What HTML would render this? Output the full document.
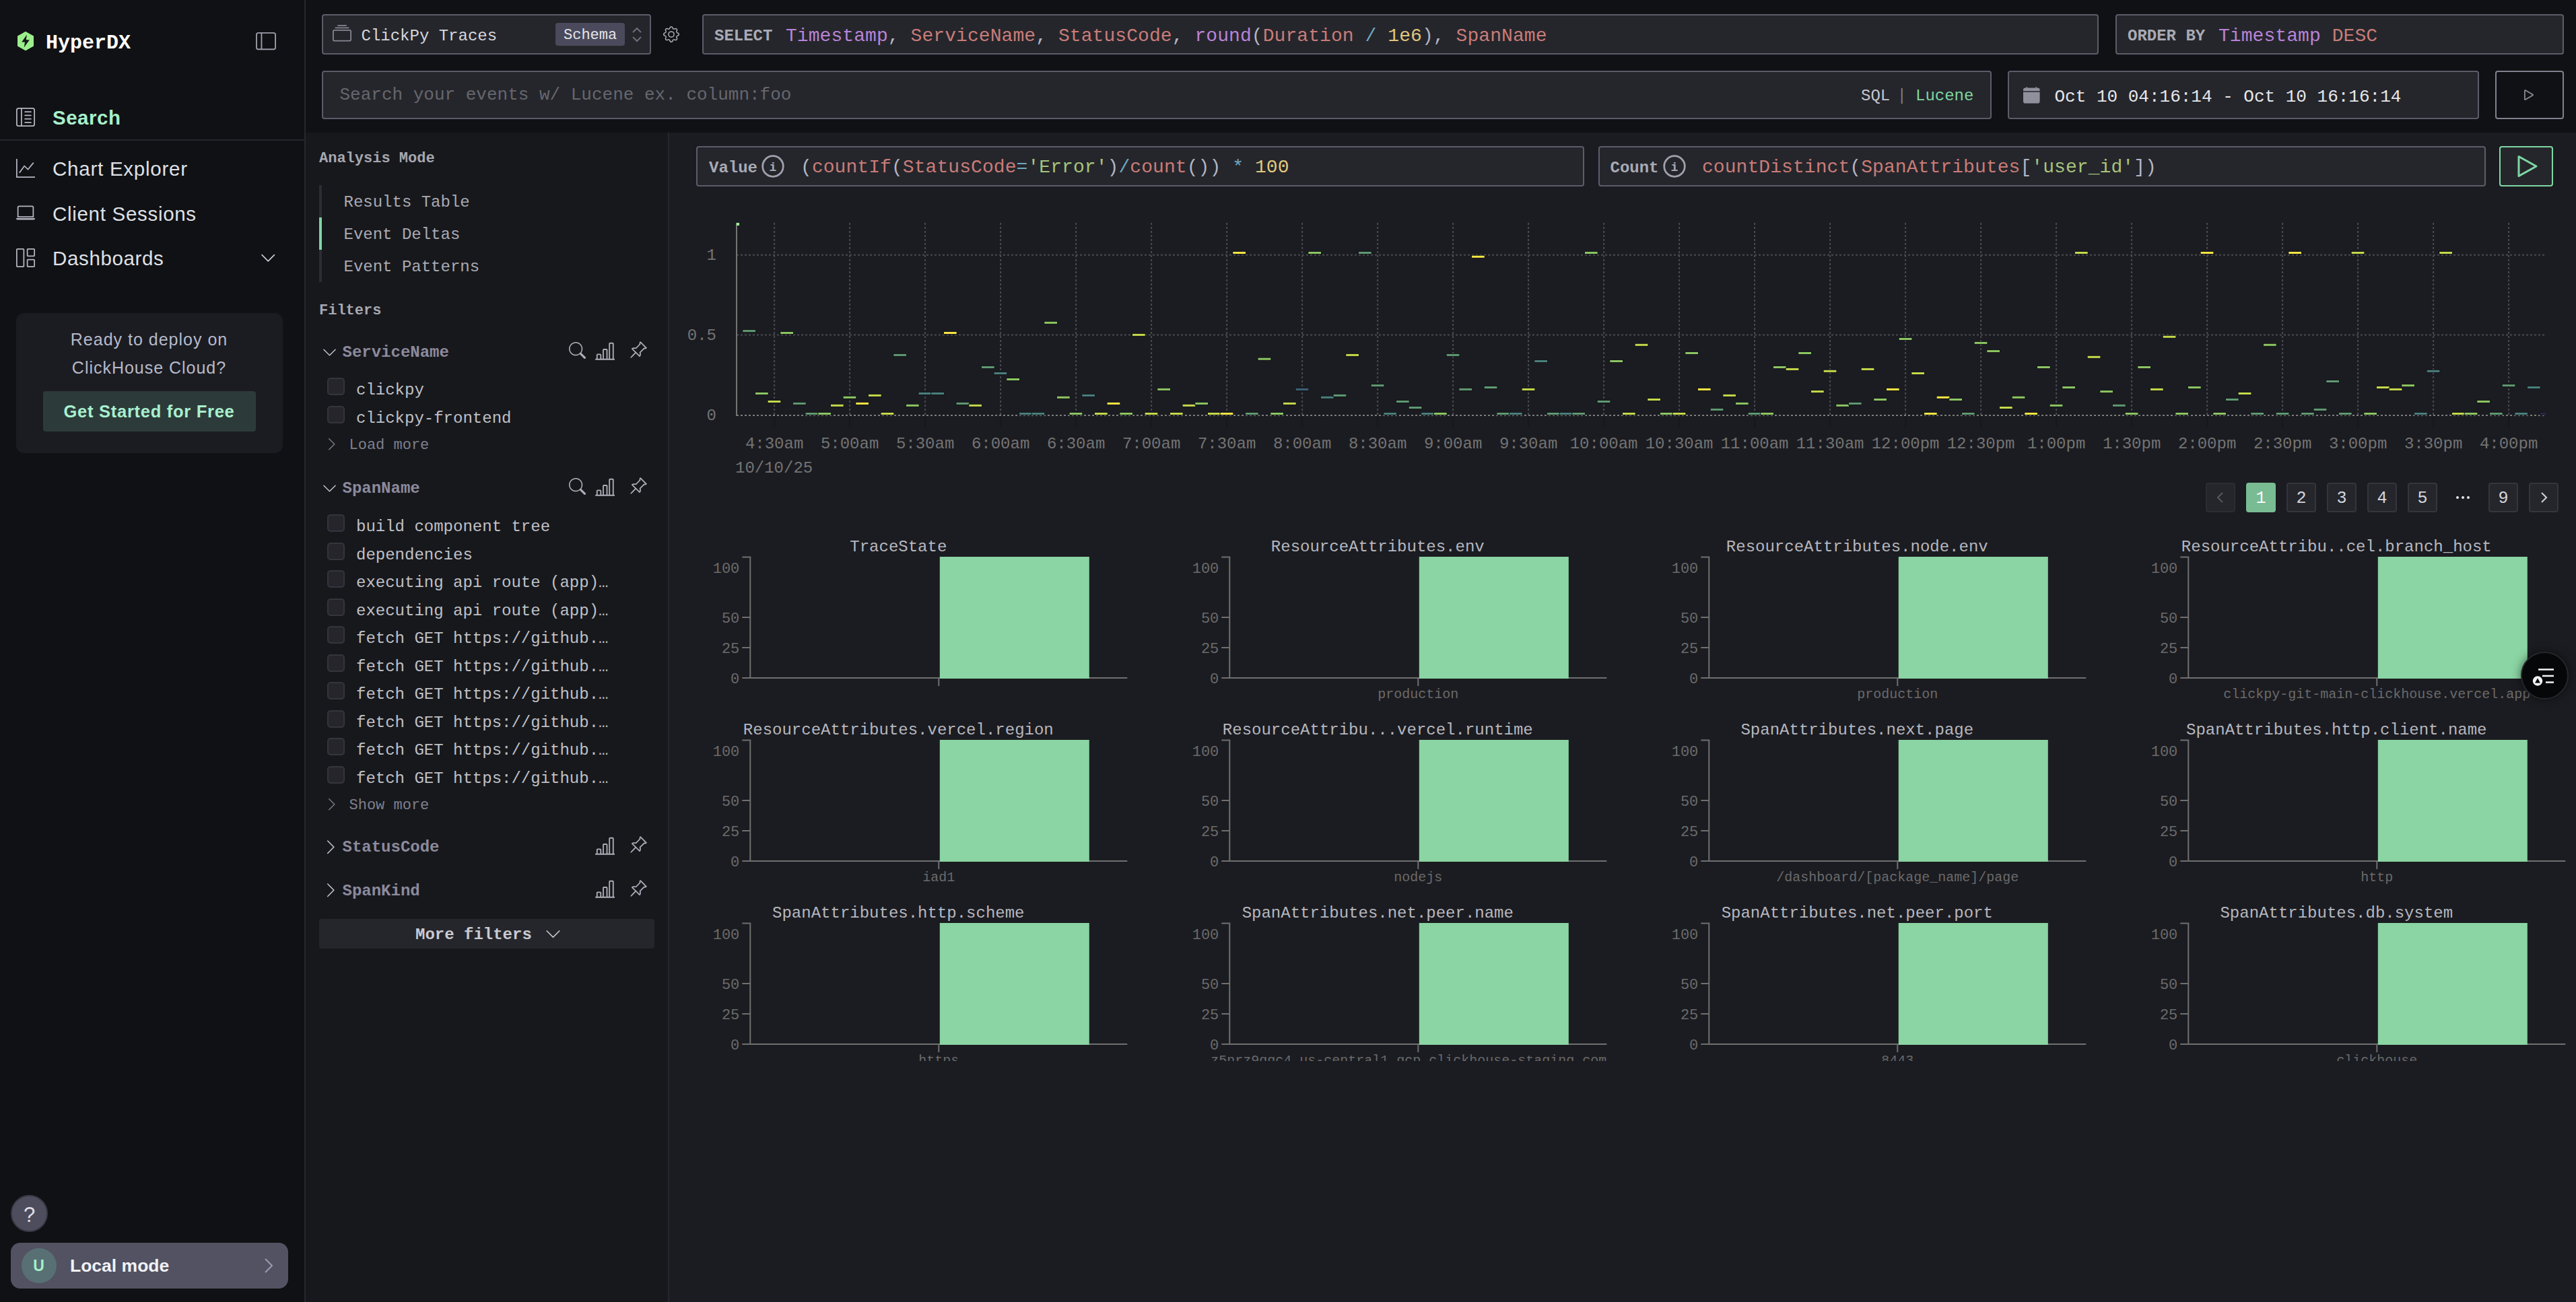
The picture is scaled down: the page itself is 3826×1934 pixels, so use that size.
<!DOCTYPE html>
<html lang="en"><head><meta charset="utf-8"><title>HyperDX - Search</title>
<style>
html,body{margin:0;padding:0;background:#1b1c21;}
body{width:3826px;height:1934px;position:relative;overflow:hidden;}
body>div,body>svg{position:absolute;}
.t{white-space:pre;}
</style></head><body>
<div style="left:0px;top:0px;width:3826px;height:1934px;background:#1b1c21"></div>
<div style="left:0px;top:0px;width:452px;height:1934px;background:#101114"></div>
<div style="left:452px;top:0px;width:2px;height:1934px;background:#26272d"></div>
<div style="left:454px;top:0px;width:3372px;height:197px;background:#101114"></div>
<div style="left:454px;top:197px;width:538px;height:1737px;background:#17181c"></div>
<div style="left:992px;top:197px;width:2px;height:1737px;background:#26272d"></div>
<svg style="left:24px;top:45px;" width="28" height="32" viewBox="0 0 28 32" fill="none"><path d="M14 1.8 L26 8.6 V23.4 L14 30.2 L2 23.4 V8.6 Z" fill="#9bef8b"/><path d="M15.9 6.6 L8.2 17.4 H13 L11.7 25.4 L19.8 14.2 H14.8 Z" fill="#14161a"/></svg>
<div class="t" style="left:68px;top:49.35px;font:700 30px/30px 'Liberation Mono', monospace;color:#ffffff;">HyperDX</div>
<svg style="left:380px;top:46px" width="30" height="30" viewBox="0 0 16 16"><path fill="#9b9ca9" fill-rule="evenodd" d="M0 3a2 2 0 0 1 2-2h12a2 2 0 0 1 2 2v10a2 2 0 0 1-2 2H2a2 2 0 0 1-2-2V3zm5-1v12h9a1 1 0 0 0 1-1V3a1 1 0 0 0-1-1H5zM4 2H2a1 1 0 0 0-1 1v10a1 1 0 0 0 1 1h2V2z"/></svg>
<svg style="left:24px;top:160px" width="28" height="28" viewBox="0 0 16 16"><path fill="#b4b5c2" fill-rule="evenodd" d="M12.5 3a.5.5 0 0 1 0 1h-5a.5.5 0 0 1 0-1h5zm0 3a.5.5 0 0 1 0 1h-5a.5.5 0 0 1 0-1h5zm.5 3.5a.5.5 0 0 0-.5-.5h-5a.5.5 0 0 0 0 1h5a.5.5 0 0 0 .5-.5zm-.5 2.5a.5.5 0 0 1 0 1h-5a.5.5 0 0 1 0-1h5z M16 2a2 2 0 0 0-2-2H2a2 2 0 0 0-2 2v12a2 2 0 0 0 2 2h12a2 2 0 0 0 2-2V2zM4 1v14H2a1 1 0 0 1-1-1V2a1 1 0 0 1 1-1h2zm1 0h9a1 1 0 0 1 1 1v12a1 1 0 0 1-1 1H5V1z"/></svg>
<div class="t" style="left:78px;top:160.37px;font:700 29.5px/29.5px 'Liberation Sans', sans-serif;color:#a7efcb;letter-spacing:0.5px;">Search</div>
<div style="left:0px;top:207px;width:452px;height:2px;background:#26272d"></div>
<svg style="left:24px;top:236px" width="28" height="28" viewBox="0 0 16 16"><path fill="#b4b5c2" fill-rule="evenodd" d="M0 0h1v15h15v1H0V0Zm14.817 3.113a.5.5 0 0 1 .07.704l-4.5 5.5a.5.5 0 0 1-.74.037L7.06 6.767l-3.656 5.027a.5.5 0 0 1-.808-.588l4-5.5a.5.5 0 0 1 .758-.06l2.609 2.61 4.15-5.073a.5.5 0 0 1 .704-.07Z"/></svg>
<div class="t" style="left:78px;top:236.27px;font:400 29.5px/29.5px 'Liberation Sans', sans-serif;color:#dfe0e6;letter-spacing:0.76px;">Chart Explorer</div>
<svg style="left:24px;top:302.2px" width="28" height="28" viewBox="0 0 16 16"><path fill="#b4b5c2" fill-rule="evenodd" d="M13.5 3a.5.5 0 0 1 .5.5V11H2V3.5a.5.5 0 0 1 .5-.5h11zm-11-1A1.5 1.5 0 0 0 1 3.5V12h14V3.5A1.5 1.5 0 0 0 13.5 2h-11zM0 12.5h16a1.5 1.5 0 0 1-1.5 1.5h-13A1.5 1.5 0 0 1 0 12.5z"/></svg>
<div class="t" style="left:78px;top:302.57px;font:400 29.5px/29.5px 'Liberation Sans', sans-serif;color:#dfe0e6;letter-spacing:0.7px;">Client Sessions</div>
<svg style="left:24px;top:368.6px" width="28" height="28" viewBox="0 0 16 16"><path fill="#b4b5c2" fill-rule="evenodd" d="M6 1H1v14h5V1zm9 0h-5v5h5V1zm0 9v5h-5v-5h5zM0 1a1 1 0 0 1 1-1h5a1 1 0 0 1 1 1v14a1 1 0 0 1-1 1H1a1 1 0 0 1-1-1V1zm9 0a1 1 0 0 1 1-1h5a1 1 0 0 1 1 1v5a1 1 0 0 1-1 1h-5a1 1 0 0 1-1-1V1zm1 8a1 1 0 0 0-1 1v5a1 1 0 0 0 1 1h5a1 1 0 0 0 1-1v-5a1 1 0 0 0-1-1h-5z"/></svg>
<div class="t" style="left:78px;top:369.17px;font:400 29.5px/29.5px 'Liberation Sans', sans-serif;color:#dfe0e6;letter-spacing:0.64px;">Dashboards</div>
<svg style="left:385.6px;top:371.3px" width="24.5" height="24.5" viewBox="0 0 16 16"><path fill="#d0d1da" fill-rule="evenodd" d="M1.646 4.646a.5.5 0 0 1 .708 0L8 10.293l5.646-5.647a.5.5 0 0 1 .708.708l-6 6a.5.5 0 0 1-.708 0l-6-6a.5.5 0 0 1 0-.708z"/></svg>
<div style="left:24px;top:465px;width:396px;height:208px;background:#1b1c21;border-radius:12px"></div>
<div class="t" style="left:221.5px;transform:translateX(-50%);top:492.08px;font:400 25px/25px 'Liberation Sans', sans-serif;color:#b7b9ca;letter-spacing:1.0px;">Ready to deploy on</div>
<div class="t" style="left:221.5px;transform:translateX(-50%);top:534.27px;font:400 25px/25px 'Liberation Sans', sans-serif;color:#b7b9ca;letter-spacing:0.98px;">ClickHouse Cloud?</div>
<div style="left:64px;top:581px;width:316px;height:60px;background:#2c3b39;border-radius:4px"></div>
<div class="t" style="left:221.5px;transform:translateX(-50%);top:598.95px;font:700 25.5px/25.5px 'Liberation Sans', sans-serif;color:#a8f0cf;letter-spacing:0.72px;">Get Started for Free</div>
<div style="left:16px;top:1775px;width:55px;height:55px;background:#4e4d5e;border-radius:50%;box-sizing:border-box;border:2px solid #3a3a46"></div>
<div class="t" style="left:43.5px;transform:translateX(-50%);top:1789.31px;font:400 31px/31px 'Liberation Sans', sans-serif;color:#e2e2ea;">?</div>
<div style="left:16px;top:1846px;width:412px;height:68px;background:#525263;border-radius:14px"></div>
<div style="left:32px;top:1854px;width:52px;height:52px;background:#587074;border-radius:50%"></div>
<div class="t" style="left:57.5px;transform:translateX(-50%);top:1869.16px;font:700 23px/23px 'Liberation Sans', sans-serif;color:#a7efcb;">U</div>
<div class="t" style="left:104px;top:1867.31px;font:700 26.5px/26.5px 'Liberation Sans', sans-serif;color:#f1f1f5;">Local mode</div>
<svg style="left:388px;top:1866px;" width="22" height="28" viewBox="0 0 22 28" fill="none"><path d="M6 4 L16 14 L6 24" stroke="#9a9bb0" stroke-width="2"/></svg>
<div style="left:478px;top:21px;width:489px;height:60px;background:#25262b;border:2px solid #5b5c69;border-radius:4px;box-sizing:border-box"></div>
<svg style="left:494px;top:36px" width="28" height="28" viewBox="0 0 16 16"><path fill="#868792" fill-rule="evenodd" d="M2.5 3.5a.5.5 0 0 1 0-1h11a.5.5 0 0 1 0 1h-11zm2-2a.5.5 0 0 1 0-1h7a.5.5 0 0 1 0 1h-7zM0 13a1.5 1.5 0 0 0 1.5 1.5h13A1.5 1.5 0 0 0 16 13V6a1.5 1.5 0 0 0-1.5-1.5h-13A1.5 1.5 0 0 0 0 6v7zm1.5.5A.5.5 0 0 1 1 13V6a.5.5 0 0 1 .5-.5h13a.5.5 0 0 1 .5.5v7a.5.5 0 0 1-.5.5h-13z"/></svg>
<div class="t" style="left:536.5px;top:42.14px;font:400 24px/24px 'Liberation Mono', monospace;color:#d6d7de;">ClickPy Traces</div>
<div style="left:825px;top:34px;width:103px;height:34px;background:#4a4a5c;border-radius:4px"></div>
<div class="t" style="left:837px;top:41.67px;font:400 22px/22px 'Liberation Mono', monospace;color:#e3e4ea;">Schema</div>
<svg style="left:936px;top:38px;" width="20" height="27" viewBox="0 0 20 27" fill="none"><path d="M4 10 L10 4 L16 10M4 17 L10 23 L16 17" stroke="#6d6e7b" stroke-width="2"/></svg>
<svg style="left:984.8px;top:39px" width="24" height="24" viewBox="0 0 16 16"><path fill="#adaeb9" fill-rule="evenodd" d="M8 4.754a3.246 3.246 0 1 0 0 6.492 3.246 3.246 0 0 0 0-6.492zM5.754 8a2.246 2.246 0 1 1 4.492 0 2.246 2.246 0 0 1-4.492 0z M9.796 1.343c-.527-1.79-3.065-1.79-3.592 0l-.094.319a.873.873 0 0 1-1.255.52l-.292-.16c-1.64-.892-3.433.902-2.54 2.541l.159.292a.873.873 0 0 1-.52 1.255l-.319.094c-1.79.527-1.79 3.065 0 3.592l.319.094a.873.873 0 0 1 .52 1.255l-.16.292c-.892 1.64.901 3.434 2.541 2.54l.292-.159a.873.873 0 0 1 1.255.52l.094.319c.527 1.79 3.065 1.79 3.592 0l.094-.319a.873.873 0 0 1 1.255-.52l.292.16c1.64.893 3.434-.902 2.54-2.541l-.159-.292a.873.873 0 0 1 .52-1.255l.319-.094c1.79-.527 1.79-3.065 0-3.592l-.319-.094a.873.873 0 0 1-.52-1.255l.16-.292c.893-1.64-.902-3.433-2.541-2.54l-.292.159a.873.873 0 0 1-1.255-.52l-.094-.319zm-2.633.283c.246-.835 1.428-.835 1.674 0l.094.319a1.873 1.873 0 0 0 2.693 1.115l.291-.16c.764-.415 1.6.42 1.184 1.185l-.159.292a1.873 1.873 0 0 0 1.116 2.692l.318.094c.835.246.835 1.428 0 1.674l-.319.094a1.873 1.873 0 0 0-1.115 2.693l.16.291c.415.764-.42 1.6-1.185 1.184l-.291-.159a1.873 1.873 0 0 0-2.693 1.116l-.094.318c-.246.835-1.428.835-1.674 0l-.094-.319a1.873 1.873 0 0 0-2.692-1.115l-.292.16c-.764.415-1.6-.42-1.184-1.185l.159-.291A1.873 1.873 0 0 0 1.945 8.93l-.319-.094c-.835-.246-.835-1.428 0-1.674l.319-.094A1.873 1.873 0 0 0 3.06 4.377l-.16-.292c-.415-.764.42-1.6 1.185-1.184l.292.159a1.873 1.873 0 0 0 2.692-1.115l.094-.319z"/></svg>
<div style="left:1043px;top:21px;width:2074px;height:60px;background:#25262b;border:2px solid #5b5c69;border-radius:4px;box-sizing:border-box"></div>
<div class="t" style="left:1061px;top:42.44px;font:700 24px/24px 'Liberation Mono', monospace;color:#a9aab5;">SELECT</div>
<div class="t" style="left:1167px;top:39.88px;font:400 28px/28px 'Liberation Mono', monospace;color:#b3b5c6;letter-spacing:0.07px;"><span style="color:#b883d8">Timestamp</span><span style="color:#b3b5c6">, </span><span style="color:#c97c79">ServiceName</span><span style="color:#b3b5c6">, </span><span style="color:#c97c79">StatusCode</span><span style="color:#b3b5c6">, </span><span style="color:#b883d8">round</span><span style="color:#b3b5c6">(</span><span style="color:#c97c79">Duration</span> <span style="color:#6ea9c2">/</span> <span style="color:#e1c67f">1e6</span><span style="color:#b3b5c6">), </span><span style="color:#c97c79">SpanName</span></div>
<div style="left:3142px;top:21px;width:666px;height:60px;background:#25262b;border:2px solid #5b5c69;border-radius:4px;box-sizing:border-box"></div>
<div class="t" style="left:3160px;top:42.44px;font:700 24px/24px 'Liberation Mono', monospace;color:#a9aab5;">ORDER BY</div>
<div class="t" style="left:3295px;top:39.88px;font:400 28px/28px 'Liberation Mono', monospace;color:#b3b5c6;letter-spacing:0.07px;"><span style="color:#b883d8">Timestamp</span> <span style="color:#c97c79">DESC</span></div>
<div style="left:478px;top:105px;width:2480px;height:72px;background:#25262b;border:2px solid #5b5c69;border-radius:4px;box-sizing:border-box"></div>
<div class="t" style="left:504.5px;top:128.11px;font:400 26px/26px 'Liberation Mono', monospace;color:#65666f;">Search your events w/ Lucene ex. column:foo</div>
<div class="t" style="left:2764px;top:131.44px;font:400 24px/24px 'Liberation Mono', monospace;color:#c5c6cf;">SQL</div>
<div class="t" style="left:2817.5px;top:131.44px;font:400 24px/24px 'Liberation Mono', monospace;color:#7d7e8a;">|</div>
<div class="t" style="left:2845px;top:131.44px;font:400 24px/24px 'Liberation Mono', monospace;color:#7fd6a4;">Lucene</div>
<div style="left:2982px;top:105px;width:700px;height:72px;background:#25262b;border:2px solid #5b5c69;border-radius:4px;box-sizing:border-box"></div>
<svg style="left:3005.4px;top:129.2px" width="24.6" height="24.6" viewBox="0 0 16 16"><path fill="#8f909b" fill-rule="evenodd" d="M3.5 0a.5.5 0 0 1 .5.5V1h8V.5a.5.5 0 0 1 1 0V1h1a2 2 0 0 1 2 2v11a2 2 0 0 1-2 2H2a2 2 0 0 1-2-2V5h16V4H0V3a2 2 0 0 1 2-2h1V.5a.5.5 0 0 1 .5-.5z"/></svg>
<div class="t" style="left:3051.5px;top:131.11px;font:400 26px/26px 'Liberation Mono', monospace;color:#e6e7ec;">Oct 10 04:16:14 - Oct 10 16:16:14</div>
<div style="left:3706px;top:105px;width:102px;height:72px;background:#101114;border:2px solid #80818e;border-radius:4px;box-sizing:border-box"></div>
<svg style="left:3742.3px;top:127.2px" width="28" height="28" viewBox="0 0 16 16"><path fill="#8a8b97" fill-rule="evenodd" d="M10.804 8 5 4.633v6.734L10.804 8zm.792-.696a.802.802 0 0 1 0 1.392l-6.363 3.692C4.713 12.69 4 12.345 4 11.692V4.308c0-.653.713-.998 1.233-.696l6.363 3.692z"/></svg>
<div class="t" style="left:474px;top:225.37px;font:700 22px/22px 'Liberation Mono', monospace;color:#a6a7b1;">Analysis Mode</div>
<div style="left:474px;top:275px;width:4px;height:144px;background:#2c2d34"></div>
<div style="left:474px;top:323px;width:4px;height:48px;background:#7fd6a4"></div>
<div class="t" style="left:510.5px;top:289.14px;font:400 24px/24px 'Liberation Mono', monospace;color:#a9aab4;">Results Table</div>
<div class="t" style="left:510.5px;top:337.14px;font:400 24px/24px 'Liberation Mono', monospace;color:#a9aab4;">Event Deltas</div>
<div class="t" style="left:510.5px;top:385.14px;font:400 24px/24px 'Liberation Mono', monospace;color:#a9aab4;">Event Patterns</div>
<div class="t" style="left:474px;top:450.87px;font:700 22px/22px 'Liberation Mono', monospace;color:#a6a7b1;">Filters</div>
<svg style="left:477.6px;top:512.1px" width="23" height="23" viewBox="0 0 16 16"><path fill="#c3c4cf" fill-rule="evenodd" d="M1.646 4.646a.5.5 0 0 1 .708 0L8 10.293l5.646-5.647a.5.5 0 0 1 .708.708l-6 6a.5.5 0 0 1-.708 0l-6-6a.5.5 0 0 1 0-.708z"/></svg>
<div class="t" style="left:508.5px;top:511.84px;font:700 24px/24px 'Liberation Mono', monospace;color:#8c8a9c;">ServiceName</div>
<svg style="left:845.1px;top:508.1px" width="25" height="25" viewBox="0 0 16 16"><path fill="#adaeb9" fill-rule="evenodd" d="M11.742 10.344a6.5 6.5 0 1 0-1.397 1.398h-.001c.03.04.062.078.098.115l3.85 3.85a1 1 0 0 0 1.415-1.414l-3.85-3.85a1.007 1.007 0 0 0-.115-.1zM12 6.5a5.5 5.5 0 1 1-11 0 5.5 5.5 0 0 1 11 0z"/></svg>
<svg style="left:883.6px;top:506.6px" width="29.5" height="29.5" viewBox="0 0 16 16"><path fill="#adaeb9" fill-rule="evenodd" d="M11 2a1 1 0 0 1 1-1h2a1 1 0 0 1 1 1v12h.5a.5.5 0 0 1 0 1H.5a.5.5 0 0 1 0-1H1v-3a1 1 0 0 1 1-1h2a1 1 0 0 1 1 1v3h1V7a1 1 0 0 1 1-1h2a1 1 0 0 1 1 1v7h1V2zm1 12h2V2h-2v12zm-3 0V7H7v7h2zm-5 0v-3H2v3h2z"/></svg>
<svg style="left:933.8px;top:505.9px" width="28" height="28" viewBox="0 0 16 16"><path fill="#adaeb9" fill-rule="evenodd" d="M9.828.722a.5.5 0 0 1 .354.146l4.95 4.95a.5.5 0 0 1 0 .707c-.48.48-1.072.588-1.503.588-.177 0-.335-.018-.46-.039l-3.134 3.134a5.927 5.927 0 0 1 .16 1.013c.046.702-.032 1.687-.72 2.375a.5.5 0 0 1-.707 0l-2.829-2.828-3.182 3.182c-.195.195-1.219.902-1.414.707-.195-.195.512-1.22.707-1.414l3.182-3.182-2.828-2.829a.5.5 0 0 1 0-.707c.688-.688 1.673-.767 2.375-.72a5.922 5.922 0 0 1 1.013.16l3.134-3.133a2.772 2.772 0 0 1-.04-.461c0-.43.108-1.022.589-1.503a.5.5 0 0 1 .353-.146zm.122 2.112v-.002.002zm0-.002v.002a.5.5 0 0 1-.122.51L6.293 6.878a.5.5 0 0 1-.511.12H5.78l-.014-.004a4.507 4.507 0 0 0-.288-.076 4.922 4.922 0 0 0-.765-.116c-.422-.028-.836.008-1.175.15l5.51 5.509c.141-.34.177-.753.149-1.175a4.924 4.924 0 0 0-.192-1.054l-.004-.013v-.001a.5.5 0 0 1 .12-.512l3.536-3.535a.5.5 0 0 1 .532-.115l.096.022c.087.017.208.034.344.034.114 0 .23-.011.343-.04L9.927 2.028c-.029.113-.04.23-.04.343a1.779 1.779 0 0 0 .062.46z"/></svg>
<div style="left:486px;top:561px;width:26px;height:26px;background:#25252b;border:2px solid #34353d;border-radius:5px;box-sizing:border-box"></div>
<div class="t" style="left:529px;top:568.14px;font:400 24px/24px 'Liberation Mono', monospace;color:#bfc0c6;">clickpy</div>
<div style="left:486px;top:603px;width:26px;height:26px;background:#25252b;border:2px solid #34353d;border-radius:5px;box-sizing:border-box"></div>
<div class="t" style="left:529px;top:610.14px;font:400 24px/24px 'Liberation Mono', monospace;color:#bfc0c6;">clickpy-frontend</div>
<svg style="left:482.3px;top:648.75px" width="21.5" height="21.5" viewBox="0 0 16 16"><path fill="#7e7f8c" fill-rule="evenodd" d="M4.646 1.646a.5.5 0 0 1 .708 0l6 6a.5.5 0 0 1 0 .708l-6 6a.5.5 0 0 1-.708-.708L10.293 8 4.646 2.354a.5.5 0 0 1 0-.708z"/></svg>
<div class="t" style="left:518.5px;top:651.37px;font:400 22px/22px 'Liberation Mono', monospace;color:#7e7f8c;">Load more</div>
<svg style="left:477.6px;top:714.1px" width="23" height="23" viewBox="0 0 16 16"><path fill="#c3c4cf" fill-rule="evenodd" d="M1.646 4.646a.5.5 0 0 1 .708 0L8 10.293l5.646-5.647a.5.5 0 0 1 .708.708l-6 6a.5.5 0 0 1-.708 0l-6-6a.5.5 0 0 1 0-.708z"/></svg>
<div class="t" style="left:508.5px;top:713.84px;font:700 24px/24px 'Liberation Mono', monospace;color:#8c8a9c;">SpanName</div>
<svg style="left:845.1px;top:710.1px" width="25" height="25" viewBox="0 0 16 16"><path fill="#adaeb9" fill-rule="evenodd" d="M11.742 10.344a6.5 6.5 0 1 0-1.397 1.398h-.001c.03.04.062.078.098.115l3.85 3.85a1 1 0 0 0 1.415-1.414l-3.85-3.85a1.007 1.007 0 0 0-.115-.1zM12 6.5a5.5 5.5 0 1 1-11 0 5.5 5.5 0 0 1 11 0z"/></svg>
<svg style="left:883.6px;top:708.6px" width="29.5" height="29.5" viewBox="0 0 16 16"><path fill="#adaeb9" fill-rule="evenodd" d="M11 2a1 1 0 0 1 1-1h2a1 1 0 0 1 1 1v12h.5a.5.5 0 0 1 0 1H.5a.5.5 0 0 1 0-1H1v-3a1 1 0 0 1 1-1h2a1 1 0 0 1 1 1v3h1V7a1 1 0 0 1 1-1h2a1 1 0 0 1 1 1v7h1V2zm1 12h2V2h-2v12zm-3 0V7H7v7h2zm-5 0v-3H2v3h2z"/></svg>
<svg style="left:933.8px;top:707.9px" width="28" height="28" viewBox="0 0 16 16"><path fill="#adaeb9" fill-rule="evenodd" d="M9.828.722a.5.5 0 0 1 .354.146l4.95 4.95a.5.5 0 0 1 0 .707c-.48.48-1.072.588-1.503.588-.177 0-.335-.018-.46-.039l-3.134 3.134a5.927 5.927 0 0 1 .16 1.013c.046.702-.032 1.687-.72 2.375a.5.5 0 0 1-.707 0l-2.829-2.828-3.182 3.182c-.195.195-1.219.902-1.414.707-.195-.195.512-1.22.707-1.414l3.182-3.182-2.828-2.829a.5.5 0 0 1 0-.707c.688-.688 1.673-.767 2.375-.72a5.922 5.922 0 0 1 1.013.16l3.134-3.133a2.772 2.772 0 0 1-.04-.461c0-.43.108-1.022.589-1.503a.5.5 0 0 1 .353-.146zm.122 2.112v-.002.002zm0-.002v.002a.5.5 0 0 1-.122.51L6.293 6.878a.5.5 0 0 1-.511.12H5.78l-.014-.004a4.507 4.507 0 0 0-.288-.076 4.922 4.922 0 0 0-.765-.116c-.422-.028-.836.008-1.175.15l5.51 5.509c.141-.34.177-.753.149-1.175a4.924 4.924 0 0 0-.192-1.054l-.004-.013v-.001a.5.5 0 0 1 .12-.512l3.536-3.535a.5.5 0 0 1 .532-.115l.096.022c.087.017.208.034.344.034.114 0 .23-.011.343-.04L9.927 2.028c-.029.113-.04.23-.04.343a1.779 1.779 0 0 0 .062.46z"/></svg>
<div style="left:486px;top:764.3px;width:26px;height:26px;background:#25252b;border:2px solid #34353d;border-radius:5px;box-sizing:border-box"></div>
<div class="t" style="left:529px;top:771.44px;font:400 24px/24px 'Liberation Mono', monospace;color:#bfc0c6;">build component tree</div>
<div style="left:486px;top:805.78px;width:26px;height:26px;background:#25252b;border:2px solid #34353d;border-radius:5px;box-sizing:border-box"></div>
<div class="t" style="left:529px;top:812.92px;font:400 24px/24px 'Liberation Mono', monospace;color:#bfc0c6;">dependencies</div>
<div style="left:486px;top:847.26px;width:26px;height:26px;background:#25252b;border:2px solid #34353d;border-radius:5px;box-sizing:border-box"></div>
<div class="t" style="left:529px;top:854.40px;font:400 24px/24px 'Liberation Mono', monospace;color:#bfc0c6;">executing api route (app)…</div>
<div style="left:486px;top:888.74px;width:26px;height:26px;background:#25252b;border:2px solid #34353d;border-radius:5px;box-sizing:border-box"></div>
<div class="t" style="left:529px;top:895.88px;font:400 24px/24px 'Liberation Mono', monospace;color:#bfc0c6;">executing api route (app)…</div>
<div style="left:486px;top:930.2199999999999px;width:26px;height:26px;background:#25252b;border:2px solid #34353d;border-radius:5px;box-sizing:border-box"></div>
<div class="t" style="left:529px;top:937.36px;font:400 24px/24px 'Liberation Mono', monospace;color:#bfc0c6;">fetch GET https://github.…</div>
<div style="left:486px;top:971.6999999999999px;width:26px;height:26px;background:#25252b;border:2px solid #34353d;border-radius:5px;box-sizing:border-box"></div>
<div class="t" style="left:529px;top:978.84px;font:400 24px/24px 'Liberation Mono', monospace;color:#bfc0c6;">fetch GET https://github.…</div>
<div style="left:486px;top:1013.18px;width:26px;height:26px;background:#25252b;border:2px solid #34353d;border-radius:5px;box-sizing:border-box"></div>
<div class="t" style="left:529px;top:1020.32px;font:400 24px/24px 'Liberation Mono', monospace;color:#bfc0c6;">fetch GET https://github.…</div>
<div style="left:486px;top:1054.6599999999999px;width:26px;height:26px;background:#25252b;border:2px solid #34353d;border-radius:5px;box-sizing:border-box"></div>
<div class="t" style="left:529px;top:1061.80px;font:400 24px/24px 'Liberation Mono', monospace;color:#bfc0c6;">fetch GET https://github.…</div>
<div style="left:486px;top:1096.1399999999999px;width:26px;height:26px;background:#25252b;border:2px solid #34353d;border-radius:5px;box-sizing:border-box"></div>
<div class="t" style="left:529px;top:1103.28px;font:400 24px/24px 'Liberation Mono', monospace;color:#bfc0c6;">fetch GET https://github.…</div>
<div style="left:486px;top:1137.62px;width:26px;height:26px;background:#25252b;border:2px solid #34353d;border-radius:5px;box-sizing:border-box"></div>
<div class="t" style="left:529px;top:1144.76px;font:400 24px/24px 'Liberation Mono', monospace;color:#bfc0c6;">fetch GET https://github.…</div>
<svg style="left:482.3px;top:1183.75px" width="21.5" height="21.5" viewBox="0 0 16 16"><path fill="#7e7f8c" fill-rule="evenodd" d="M4.646 1.646a.5.5 0 0 1 .708 0l6 6a.5.5 0 0 1 0 .708l-6 6a.5.5 0 0 1-.708-.708L10.293 8 4.646 2.354a.5.5 0 0 1 0-.708z"/></svg>
<div class="t" style="left:518.5px;top:1186.37px;font:400 22px/22px 'Liberation Mono', monospace;color:#7e7f8c;">Show more</div>
<svg style="left:478.5px;top:1245.75px" width="24.5" height="24.5" viewBox="0 0 16 16"><path fill="#c3c4cf" fill-rule="evenodd" d="M4.646 1.646a.5.5 0 0 1 .708 0l6 6a.5.5 0 0 1 0 .708l-6 6a.5.5 0 0 1-.708-.708L10.293 8 4.646 2.354a.5.5 0 0 1 0-.708z"/></svg>
<div class="t" style="left:508.5px;top:1247.34px;font:700 24px/24px 'Liberation Mono', monospace;color:#8c8a9c;">StatusCode</div>
<svg style="left:883.6px;top:1242.1px" width="29.5" height="29.5" viewBox="0 0 16 16"><path fill="#adaeb9" fill-rule="evenodd" d="M11 2a1 1 0 0 1 1-1h2a1 1 0 0 1 1 1v12h.5a.5.5 0 0 1 0 1H.5a.5.5 0 0 1 0-1H1v-3a1 1 0 0 1 1-1h2a1 1 0 0 1 1 1v3h1V7a1 1 0 0 1 1-1h2a1 1 0 0 1 1 1v7h1V2zm1 12h2V2h-2v12zm-3 0V7H7v7h2zm-5 0v-3H2v3h2z"/></svg>
<svg style="left:933.8px;top:1241.4px" width="28" height="28" viewBox="0 0 16 16"><path fill="#adaeb9" fill-rule="evenodd" d="M9.828.722a.5.5 0 0 1 .354.146l4.95 4.95a.5.5 0 0 1 0 .707c-.48.48-1.072.588-1.503.588-.177 0-.335-.018-.46-.039l-3.134 3.134a5.927 5.927 0 0 1 .16 1.013c.046.702-.032 1.687-.72 2.375a.5.5 0 0 1-.707 0l-2.829-2.828-3.182 3.182c-.195.195-1.219.902-1.414.707-.195-.195.512-1.22.707-1.414l3.182-3.182-2.828-2.829a.5.5 0 0 1 0-.707c.688-.688 1.673-.767 2.375-.72a5.922 5.922 0 0 1 1.013.16l3.134-3.133a2.772 2.772 0 0 1-.04-.461c0-.43.108-1.022.589-1.503a.5.5 0 0 1 .353-.146zm.122 2.112v-.002.002zm0-.002v.002a.5.5 0 0 1-.122.51L6.293 6.878a.5.5 0 0 1-.511.12H5.78l-.014-.004a4.507 4.507 0 0 0-.288-.076 4.922 4.922 0 0 0-.765-.116c-.422-.028-.836.008-1.175.15l5.51 5.509c.141-.34.177-.753.149-1.175a4.924 4.924 0 0 0-.192-1.054l-.004-.013v-.001a.5.5 0 0 1 .12-.512l3.536-3.535a.5.5 0 0 1 .532-.115l.096.022c.087.017.208.034.344.034.114 0 .23-.011.343-.04L9.927 2.028c-.029.113-.04.23-.04.343a1.779 1.779 0 0 0 .062.46z"/></svg>
<svg style="left:478.5px;top:1309.95px" width="24.5" height="24.5" viewBox="0 0 16 16"><path fill="#c3c4cf" fill-rule="evenodd" d="M4.646 1.646a.5.5 0 0 1 .708 0l6 6a.5.5 0 0 1 0 .708l-6 6a.5.5 0 0 1-.708-.708L10.293 8 4.646 2.354a.5.5 0 0 1 0-.708z"/></svg>
<div class="t" style="left:508.5px;top:1311.54px;font:700 24px/24px 'Liberation Mono', monospace;color:#8c8a9c;">SpanKind</div>
<svg style="left:883.6px;top:1306.3px" width="29.5" height="29.5" viewBox="0 0 16 16"><path fill="#adaeb9" fill-rule="evenodd" d="M11 2a1 1 0 0 1 1-1h2a1 1 0 0 1 1 1v12h.5a.5.5 0 0 1 0 1H.5a.5.5 0 0 1 0-1H1v-3a1 1 0 0 1 1-1h2a1 1 0 0 1 1 1v3h1V7a1 1 0 0 1 1-1h2a1 1 0 0 1 1 1v7h1V2zm1 12h2V2h-2v12zm-3 0V7H7v7h2zm-5 0v-3H2v3h2z"/></svg>
<svg style="left:933.8px;top:1305.6000000000001px" width="28" height="28" viewBox="0 0 16 16"><path fill="#adaeb9" fill-rule="evenodd" d="M9.828.722a.5.5 0 0 1 .354.146l4.95 4.95a.5.5 0 0 1 0 .707c-.48.48-1.072.588-1.503.588-.177 0-.335-.018-.46-.039l-3.134 3.134a5.927 5.927 0 0 1 .16 1.013c.046.702-.032 1.687-.72 2.375a.5.5 0 0 1-.707 0l-2.829-2.828-3.182 3.182c-.195.195-1.219.902-1.414.707-.195-.195.512-1.22.707-1.414l3.182-3.182-2.828-2.829a.5.5 0 0 1 0-.707c.688-.688 1.673-.767 2.375-.72a5.922 5.922 0 0 1 1.013.16l3.134-3.133a2.772 2.772 0 0 1-.04-.461c0-.43.108-1.022.589-1.503a.5.5 0 0 1 .353-.146zm.122 2.112v-.002.002zm0-.002v.002a.5.5 0 0 1-.122.51L6.293 6.878a.5.5 0 0 1-.511.12H5.78l-.014-.004a4.507 4.507 0 0 0-.288-.076 4.922 4.922 0 0 0-.765-.116c-.422-.028-.836.008-1.175.15l5.51 5.509c.141-.34.177-.753.149-1.175a4.924 4.924 0 0 0-.192-1.054l-.004-.013v-.001a.5.5 0 0 1 .12-.512l3.536-3.535a.5.5 0 0 1 .532-.115l.096.022c.087.017.208.034.344.034.114 0 .23-.011.343-.04L9.927 2.028c-.029.113-.04.23-.04.343a1.779 1.779 0 0 0 .062.46z"/></svg>
<div style="left:474px;top:1365px;width:498px;height:44px;background:#25262b;border-radius:4px"></div>
<div class="t" style="left:617px;top:1376.84px;font:700 24px/24px 'Liberation Mono', monospace;color:#c9cad2;">More filters</div>
<svg style="left:809.4px;top:1375.0px" width="25" height="25" viewBox="0 0 16 16"><path fill="#c9cad2" fill-rule="evenodd" d="M1.646 4.646a.5.5 0 0 1 .708 0L8 10.293l5.646-5.647a.5.5 0 0 1 .708.708l-6 6a.5.5 0 0 1-.708 0l-6-6a.5.5 0 0 1 0-.708z"/></svg>
<div style="left:1034px;top:217px;width:1319px;height:60px;background:#25262b;border:2px solid #5b5c69;border-radius:4px;box-sizing:border-box"></div>
<div class="t" style="left:1053px;top:237.64px;font:700 24px/24px 'Liberation Mono', monospace;color:#a9aab5;">Value</div>
<svg style="left:1130px;top:229px;" width="36" height="36" viewBox="0 0 36 36" fill="none"><circle cx="18" cy="18" r="15.3" stroke="#a0a1ac" stroke-width="2.8"/></svg>
<div class="t" style="left:1148px;transform:translateX(-50%);top:239.73px;font:700 18px/18px 'Liberation Mono', monospace;color:#a9aab5;">i</div>
<div class="t" style="left:1189px;top:235.18px;font:400 28px/28px 'Liberation Mono', monospace;color:#b3b5c6;letter-spacing:0.07px;"><span style="color:#b3b5c6">(</span><span style="color:#c97c79">countIf</span><span style="color:#b3b5c6">(</span><span style="color:#c97c79">StatusCode</span><span style="color:#6ea9c2">=</span><span style="color:#a6c47d">&#x27;Error&#x27;</span><span style="color:#b3b5c6">)</span><span style="color:#6ea9c2">/</span><span style="color:#c97c79">count</span><span style="color:#b3b5c6">())</span> <span style="color:#6ea9c2">*</span> <span style="color:#e1c67f">100</span></div>
<div style="left:2374px;top:217px;width:1318px;height:60px;background:#25262b;border:2px solid #5b5c69;border-radius:4px;box-sizing:border-box"></div>
<div class="t" style="left:2391.5px;top:237.64px;font:700 24px/24px 'Liberation Mono', monospace;color:#a9aab5;">Count</div>
<svg style="left:2469px;top:229px;" width="36" height="36" viewBox="0 0 36 36" fill="none"><circle cx="18" cy="18" r="15.3" stroke="#a0a1ac" stroke-width="2.8"/></svg>
<div class="t" style="left:2487px;transform:translateX(-50%);top:239.73px;font:700 18px/18px 'Liberation Mono', monospace;color:#a9aab5;">i</div>
<div class="t" style="left:2528px;top:235.18px;font:400 28px/28px 'Liberation Mono', monospace;color:#b3b5c6;letter-spacing:0.07px;"><span style="color:#c97c79">countDistinct</span><span style="color:#b3b5c6">(</span><span style="color:#c97c79">SpanAttributes</span><span style="color:#b3b5c6">[</span><span style="color:#a6c47d">&#x27;user_id&#x27;</span><span style="color:#b3b5c6">])</span></div>
<div style="left:3712px;top:217px;width:80px;height:60px;background:#25262b;border:2px solid #7fd6a4;border-radius:4px;box-sizing:border-box"></div>
<svg style="left:3735px;top:228px;" width="38" height="38" viewBox="0 0 38 38" fill="none"><path d="M6 4.500 L32 19 L6 33.500 Z" stroke="#7fd6a4" stroke-width="3" stroke-linejoin="round"/></svg>
<svg style="left:0;top:0" width="3826" height="760" viewBox="0 0 3826 760" font-family="'Liberation Mono', monospace"><path d="M1150.1 331.0V617.0" stroke="#494b51" stroke-width="2" stroke-dasharray="3 3"/><path d="M1150.1 618.0V635.0" stroke="#17181c" stroke-width="2"/><path d="M1262.1 331.0V617.0" stroke="#494b51" stroke-width="2" stroke-dasharray="3 3"/><path d="M1262.1 618.0V635.0" stroke="#17181c" stroke-width="2"/><path d="M1374.1 331.0V617.0" stroke="#494b51" stroke-width="2" stroke-dasharray="3 3"/><path d="M1374.1 618.0V635.0" stroke="#17181c" stroke-width="2"/><path d="M1486.1 331.0V617.0" stroke="#494b51" stroke-width="2" stroke-dasharray="3 3"/><path d="M1486.1 618.0V635.0" stroke="#17181c" stroke-width="2"/><path d="M1598.1 331.0V617.0" stroke="#494b51" stroke-width="2" stroke-dasharray="3 3"/><path d="M1598.1 618.0V635.0" stroke="#17181c" stroke-width="2"/><path d="M1710.1 331.0V617.0" stroke="#494b51" stroke-width="2" stroke-dasharray="3 3"/><path d="M1710.1 618.0V635.0" stroke="#17181c" stroke-width="2"/><path d="M1822.1 331.0V617.0" stroke="#494b51" stroke-width="2" stroke-dasharray="3 3"/><path d="M1822.1 618.0V635.0" stroke="#17181c" stroke-width="2"/><path d="M1934.1 331.0V617.0" stroke="#494b51" stroke-width="2" stroke-dasharray="3 3"/><path d="M1934.1 618.0V635.0" stroke="#17181c" stroke-width="2"/><path d="M2046.1 331.0V617.0" stroke="#494b51" stroke-width="2" stroke-dasharray="3 3"/><path d="M2046.1 618.0V635.0" stroke="#17181c" stroke-width="2"/><path d="M2158.1 331.0V617.0" stroke="#494b51" stroke-width="2" stroke-dasharray="3 3"/><path d="M2158.1 618.0V635.0" stroke="#17181c" stroke-width="2"/><path d="M2270.1 331.0V617.0" stroke="#494b51" stroke-width="2" stroke-dasharray="3 3"/><path d="M2270.1 618.0V635.0" stroke="#17181c" stroke-width="2"/><path d="M2382.1 331.0V617.0" stroke="#494b51" stroke-width="2" stroke-dasharray="3 3"/><path d="M2382.1 618.0V635.0" stroke="#17181c" stroke-width="2"/><path d="M2494.1 331.0V617.0" stroke="#494b51" stroke-width="2" stroke-dasharray="3 3"/><path d="M2494.1 618.0V635.0" stroke="#17181c" stroke-width="2"/><path d="M2606.1 331.0V617.0" stroke="#494b51" stroke-width="2" stroke-dasharray="3 3"/><path d="M2606.1 618.0V635.0" stroke="#17181c" stroke-width="2"/><path d="M2718.1 331.0V617.0" stroke="#494b51" stroke-width="2" stroke-dasharray="3 3"/><path d="M2718.1 618.0V635.0" stroke="#17181c" stroke-width="2"/><path d="M2830.1 331.0V617.0" stroke="#494b51" stroke-width="2" stroke-dasharray="3 3"/><path d="M2830.1 618.0V635.0" stroke="#17181c" stroke-width="2"/><path d="M2942.1 331.0V617.0" stroke="#494b51" stroke-width="2" stroke-dasharray="3 3"/><path d="M2942.1 618.0V635.0" stroke="#17181c" stroke-width="2"/><path d="M3054.1 331.0V617.0" stroke="#494b51" stroke-width="2" stroke-dasharray="3 3"/><path d="M3054.1 618.0V635.0" stroke="#17181c" stroke-width="2"/><path d="M3166.1 331.0V617.0" stroke="#494b51" stroke-width="2" stroke-dasharray="3 3"/><path d="M3166.1 618.0V635.0" stroke="#17181c" stroke-width="2"/><path d="M3278.1 331.0V617.0" stroke="#494b51" stroke-width="2" stroke-dasharray="3 3"/><path d="M3278.1 618.0V635.0" stroke="#17181c" stroke-width="2"/><path d="M3390.1 331.0V617.0" stroke="#494b51" stroke-width="2" stroke-dasharray="3 3"/><path d="M3390.1 618.0V635.0" stroke="#17181c" stroke-width="2"/><path d="M3502.1 331.0V617.0" stroke="#494b51" stroke-width="2" stroke-dasharray="3 3"/><path d="M3502.1 618.0V635.0" stroke="#17181c" stroke-width="2"/><path d="M3614.1 331.0V617.0" stroke="#494b51" stroke-width="2" stroke-dasharray="3 3"/><path d="M3614.1 618.0V635.0" stroke="#17181c" stroke-width="2"/><path d="M3726.1 331.0V617.0" stroke="#494b51" stroke-width="2" stroke-dasharray="3 3"/><path d="M3726.1 618.0V635.0" stroke="#17181c" stroke-width="2"/><path d="M1094.0 378.7H3780" stroke="#494b51" stroke-width="2" stroke-dasharray="3 3"/><path d="M1094.0 497.6H3780" stroke="#494b51" stroke-width="2" stroke-dasharray="3 3"/><path d="M1094.0 617.0H3782" stroke="#7c7c7c" stroke-width="2" stroke-dasharray="3 3"/><path d="M1094.0 331.0V618.0" stroke="#747474" stroke-width="2"/><rect x="1094" y="331" width="4" height="4" fill="#98f58a"/><rect x="1103.3" y="490.1" width="18.7" height="3" fill="#5f9a72" stroke="#15161a" stroke-width="2" paint-order="stroke"/><rect x="1122.0" y="583.0" width="18.7" height="3" fill="#8cc662" stroke="#15161a" stroke-width="2" paint-order="stroke"/><rect x="1140.6" y="595.0" width="18.7" height="3" fill="#c6d94a" stroke="#15161a" stroke-width="2" paint-order="stroke"/><rect x="1159.3" y="493.0" width="18.7" height="3" fill="#8cc662" stroke="#15161a" stroke-width="2" paint-order="stroke"/><rect x="1178.0" y="597.9" width="18.7" height="3" fill="#5f9a72" stroke="#15161a" stroke-width="2" paint-order="stroke"/><rect x="1196.6" y="613.0" width="18.7" height="3" fill="#5f9a72" stroke="#15161a" stroke-width="2" paint-order="stroke"/><rect x="1215.3" y="613.0" width="18.7" height="3" fill="#8cc662" stroke="#15161a" stroke-width="2" paint-order="stroke"/><rect x="1234.0" y="600.8" width="18.7" height="3" fill="#c6d94a" stroke="#15161a" stroke-width="2" paint-order="stroke"/><rect x="1252.6" y="588.8" width="18.7" height="3" fill="#8cc662" stroke="#15161a" stroke-width="2" paint-order="stroke"/><rect x="1271.3" y="597.9" width="18.7" height="3" fill="#f7e643" stroke="#15161a" stroke-width="2" paint-order="stroke"/><rect x="1290.0" y="585.9" width="18.7" height="3" fill="#c6d94a" stroke="#15161a" stroke-width="2" paint-order="stroke"/><rect x="1308.6" y="613.0" width="18.7" height="3" fill="#c6d94a" stroke="#15161a" stroke-width="2" paint-order="stroke"/><rect x="1327.3" y="525.9" width="18.7" height="3" fill="#5f9a72" stroke="#15161a" stroke-width="2" paint-order="stroke"/><rect x="1346.0" y="600.8" width="18.7" height="3" fill="#8cc662" stroke="#15161a" stroke-width="2" paint-order="stroke"/><rect x="1364.6" y="583.0" width="18.7" height="3" fill="#4a7f7d" stroke="#15161a" stroke-width="2" paint-order="stroke"/><rect x="1383.3" y="583.0" width="18.7" height="3" fill="#4a7f7d" stroke="#15161a" stroke-width="2" paint-order="stroke"/><rect x="1402.0" y="493.0" width="18.7" height="3" fill="#f7e643" stroke="#15161a" stroke-width="2" paint-order="stroke"/><rect x="1420.6" y="597.9" width="18.7" height="3" fill="#5f9a72" stroke="#15161a" stroke-width="2" paint-order="stroke"/><rect x="1439.3" y="600.8" width="18.7" height="3" fill="#c6d94a" stroke="#15161a" stroke-width="2" paint-order="stroke"/><rect x="1458.0" y="544.0" width="18.7" height="3" fill="#5f9a72" stroke="#15161a" stroke-width="2" paint-order="stroke"/><rect x="1476.6" y="553.0" width="18.7" height="3" fill="#4a7f7d" stroke="#15161a" stroke-width="2" paint-order="stroke"/><rect x="1495.3" y="562.0" width="18.7" height="3" fill="#8cc662" stroke="#15161a" stroke-width="2" paint-order="stroke"/><rect x="1514.0" y="613.0" width="18.7" height="3" fill="#4a7f7d" stroke="#15161a" stroke-width="2" paint-order="stroke"/><rect x="1532.6" y="613.0" width="18.7" height="3" fill="#4a7f7d" stroke="#15161a" stroke-width="2" paint-order="stroke"/><rect x="1551.3" y="477.9" width="18.7" height="3" fill="#8cc662" stroke="#15161a" stroke-width="2" paint-order="stroke"/><rect x="1570.0" y="588.8" width="18.7" height="3" fill="#8cc662" stroke="#15161a" stroke-width="2" paint-order="stroke"/><rect x="1588.6" y="613.0" width="18.7" height="3" fill="#8cc662" stroke="#15161a" stroke-width="2" paint-order="stroke"/><rect x="1607.3" y="585.9" width="18.7" height="3" fill="#4a7f7d" stroke="#15161a" stroke-width="2" paint-order="stroke"/><rect x="1626.0" y="613.0" width="18.7" height="3" fill="#c6d94a" stroke="#15161a" stroke-width="2" paint-order="stroke"/><rect x="1644.6" y="597.9" width="18.7" height="3" fill="#f7e643" stroke="#15161a" stroke-width="2" paint-order="stroke"/><rect x="1663.3" y="613.0" width="18.7" height="3" fill="#8cc662" stroke="#15161a" stroke-width="2" paint-order="stroke"/><rect x="1682.0" y="495.9" width="18.7" height="3" fill="#c6d94a" stroke="#15161a" stroke-width="2" paint-order="stroke"/><rect x="1700.6" y="613.0" width="18.7" height="3" fill="#c6d94a" stroke="#15161a" stroke-width="2" paint-order="stroke"/><rect x="1719.3" y="576.9" width="18.7" height="3" fill="#8cc662" stroke="#15161a" stroke-width="2" paint-order="stroke"/><rect x="1738.0" y="613.0" width="18.7" height="3" fill="#c6d94a" stroke="#15161a" stroke-width="2" paint-order="stroke"/><rect x="1756.6" y="600.8" width="18.7" height="3" fill="#c6d94a" stroke="#15161a" stroke-width="2" paint-order="stroke"/><rect x="1775.3" y="597.9" width="18.7" height="3" fill="#8cc662" stroke="#15161a" stroke-width="2" paint-order="stroke"/><rect x="1794.0" y="613.0" width="18.7" height="3" fill="#c6d94a" stroke="#15161a" stroke-width="2" paint-order="stroke"/><rect x="1812.6" y="613.0" width="18.7" height="3" fill="#f7e643" stroke="#15161a" stroke-width="2" paint-order="stroke"/><rect x="1831.3" y="374.0" width="18.7" height="3" fill="#f7e643" stroke="#15161a" stroke-width="2" paint-order="stroke"/><rect x="1850.0" y="613.0" width="18.7" height="3" fill="#5f9a72" stroke="#15161a" stroke-width="2" paint-order="stroke"/><rect x="1868.6" y="531.7" width="18.7" height="3" fill="#8cc662" stroke="#15161a" stroke-width="2" paint-order="stroke"/><rect x="1887.3" y="613.0" width="18.7" height="3" fill="#8cc662" stroke="#15161a" stroke-width="2" paint-order="stroke"/><rect x="1906.0" y="597.9" width="18.7" height="3" fill="#c6d94a" stroke="#15161a" stroke-width="2" paint-order="stroke"/><rect x="1924.6" y="576.9" width="18.7" height="3" fill="#3d6379" stroke="#15161a" stroke-width="2" paint-order="stroke"/><rect x="1943.3" y="374.0" width="18.7" height="3" fill="#8cc662" stroke="#15161a" stroke-width="2" paint-order="stroke"/><rect x="1962.0" y="588.8" width="18.7" height="3" fill="#4a7f7d" stroke="#15161a" stroke-width="2" paint-order="stroke"/><rect x="1980.6" y="585.9" width="18.7" height="3" fill="#5f9a72" stroke="#15161a" stroke-width="2" paint-order="stroke"/><rect x="1999.3" y="525.9" width="18.7" height="3" fill="#c6d94a" stroke="#15161a" stroke-width="2" paint-order="stroke"/><rect x="2018.0" y="374.0" width="18.7" height="3" fill="#5f9a72" stroke="#15161a" stroke-width="2" paint-order="stroke"/><rect x="2036.7" y="571.1" width="18.7" height="3" fill="#5f9a72" stroke="#15161a" stroke-width="2" paint-order="stroke"/><rect x="2055.3" y="613.0" width="18.7" height="3" fill="#4a7f7d" stroke="#15161a" stroke-width="2" paint-order="stroke"/><rect x="2074.0" y="595.0" width="18.7" height="3" fill="#5f9a72" stroke="#15161a" stroke-width="2" paint-order="stroke"/><rect x="2092.7" y="604.0" width="18.7" height="3" fill="#5f9a72" stroke="#15161a" stroke-width="2" paint-order="stroke"/><rect x="2111.3" y="613.0" width="18.7" height="3" fill="#4a7f7d" stroke="#15161a" stroke-width="2" paint-order="stroke"/><rect x="2130.0" y="613.0" width="18.7" height="3" fill="#8cc662" stroke="#15161a" stroke-width="2" paint-order="stroke"/><rect x="2148.7" y="525.9" width="18.7" height="3" fill="#5f9a72" stroke="#15161a" stroke-width="2" paint-order="stroke"/><rect x="2167.3" y="576.9" width="18.7" height="3" fill="#5f9a72" stroke="#15161a" stroke-width="2" paint-order="stroke"/><rect x="2186.0" y="379.8" width="18.7" height="3" fill="#f7e643" stroke="#15161a" stroke-width="2" paint-order="stroke"/><rect x="2204.7" y="574.0" width="18.7" height="3" fill="#5f9a72" stroke="#15161a" stroke-width="2" paint-order="stroke"/><rect x="2223.3" y="613.0" width="18.7" height="3" fill="#5f9a72" stroke="#15161a" stroke-width="2" paint-order="stroke"/><rect x="2242.0" y="613.0" width="18.7" height="3" fill="#4a7f7d" stroke="#15161a" stroke-width="2" paint-order="stroke"/><rect x="2260.7" y="576.9" width="18.7" height="3" fill="#c6d94a" stroke="#15161a" stroke-width="2" paint-order="stroke"/><rect x="2279.3" y="535.0" width="18.7" height="3" fill="#4a7f7d" stroke="#15161a" stroke-width="2" paint-order="stroke"/><rect x="2298.0" y="613.0" width="18.7" height="3" fill="#5f9a72" stroke="#15161a" stroke-width="2" paint-order="stroke"/><rect x="2316.7" y="613.0" width="18.7" height="3" fill="#4a7f7d" stroke="#15161a" stroke-width="2" paint-order="stroke"/><rect x="2335.3" y="613.0" width="18.7" height="3" fill="#5f9a72" stroke="#15161a" stroke-width="2" paint-order="stroke"/><rect x="2354.0" y="374.0" width="18.7" height="3" fill="#8cc662" stroke="#15161a" stroke-width="2" paint-order="stroke"/><rect x="2372.7" y="595.0" width="18.7" height="3" fill="#5f9a72" stroke="#15161a" stroke-width="2" paint-order="stroke"/><rect x="2391.3" y="535.0" width="18.7" height="3" fill="#8cc662" stroke="#15161a" stroke-width="2" paint-order="stroke"/><rect x="2410.0" y="613.0" width="18.7" height="3" fill="#c6d94a" stroke="#15161a" stroke-width="2" paint-order="stroke"/><rect x="2428.7" y="510.8" width="18.7" height="3" fill="#c6d94a" stroke="#15161a" stroke-width="2" paint-order="stroke"/><rect x="2447.3" y="592.0" width="18.7" height="3" fill="#c6d94a" stroke="#15161a" stroke-width="2" paint-order="stroke"/><rect x="2466.0" y="613.0" width="18.7" height="3" fill="#8cc662" stroke="#15161a" stroke-width="2" paint-order="stroke"/><rect x="2484.7" y="613.0" width="18.7" height="3" fill="#c6d94a" stroke="#15161a" stroke-width="2" paint-order="stroke"/><rect x="2503.3" y="523.0" width="18.7" height="3" fill="#8cc662" stroke="#15161a" stroke-width="2" paint-order="stroke"/><rect x="2522.0" y="576.9" width="18.7" height="3" fill="#f7e643" stroke="#15161a" stroke-width="2" paint-order="stroke"/><rect x="2540.7" y="606.9" width="18.7" height="3" fill="#5f9a72" stroke="#15161a" stroke-width="2" paint-order="stroke"/><rect x="2559.3" y="585.9" width="18.7" height="3" fill="#c6d94a" stroke="#15161a" stroke-width="2" paint-order="stroke"/><rect x="2578.0" y="597.9" width="18.7" height="3" fill="#8cc662" stroke="#15161a" stroke-width="2" paint-order="stroke"/><rect x="2596.7" y="613.0" width="18.7" height="3" fill="#5f9a72" stroke="#15161a" stroke-width="2" paint-order="stroke"/><rect x="2615.3" y="613.0" width="18.7" height="3" fill="#8cc662" stroke="#15161a" stroke-width="2" paint-order="stroke"/><rect x="2634.0" y="544.0" width="18.7" height="3" fill="#8cc662" stroke="#15161a" stroke-width="2" paint-order="stroke"/><rect x="2652.7" y="546.9" width="18.7" height="3" fill="#c6d94a" stroke="#15161a" stroke-width="2" paint-order="stroke"/><rect x="2671.3" y="523.0" width="18.7" height="3" fill="#8cc662" stroke="#15161a" stroke-width="2" paint-order="stroke"/><rect x="2690.0" y="580.1" width="18.7" height="3" fill="#c6d94a" stroke="#15161a" stroke-width="2" paint-order="stroke"/><rect x="2708.7" y="549.8" width="18.7" height="3" fill="#c6d94a" stroke="#15161a" stroke-width="2" paint-order="stroke"/><rect x="2727.3" y="600.8" width="18.7" height="3" fill="#8cc662" stroke="#15161a" stroke-width="2" paint-order="stroke"/><rect x="2746.0" y="597.9" width="18.7" height="3" fill="#5f9a72" stroke="#15161a" stroke-width="2" paint-order="stroke"/><rect x="2764.7" y="546.9" width="18.7" height="3" fill="#c6d94a" stroke="#15161a" stroke-width="2" paint-order="stroke"/><rect x="2783.3" y="592.0" width="18.7" height="3" fill="#8cc662" stroke="#15161a" stroke-width="2" paint-order="stroke"/><rect x="2802.0" y="576.9" width="18.7" height="3" fill="#f7e643" stroke="#15161a" stroke-width="2" paint-order="stroke"/><rect x="2820.7" y="502.0" width="18.7" height="3" fill="#8cc662" stroke="#15161a" stroke-width="2" paint-order="stroke"/><rect x="2839.3" y="553.0" width="18.7" height="3" fill="#c6d94a" stroke="#15161a" stroke-width="2" paint-order="stroke"/><rect x="2858.0" y="613.0" width="18.7" height="3" fill="#f7e643" stroke="#15161a" stroke-width="2" paint-order="stroke"/><rect x="2876.7" y="588.8" width="18.7" height="3" fill="#f7e643" stroke="#15161a" stroke-width="2" paint-order="stroke"/><rect x="2895.3" y="592.0" width="18.7" height="3" fill="#8cc662" stroke="#15161a" stroke-width="2" paint-order="stroke"/><rect x="2914.0" y="613.0" width="18.7" height="3" fill="#5f9a72" stroke="#15161a" stroke-width="2" paint-order="stroke"/><rect x="2932.7" y="507.9" width="18.7" height="3" fill="#8cc662" stroke="#15161a" stroke-width="2" paint-order="stroke"/><rect x="2951.3" y="520.1" width="18.7" height="3" fill="#8cc662" stroke="#15161a" stroke-width="2" paint-order="stroke"/><rect x="2970.0" y="604.0" width="18.7" height="3" fill="#c6d94a" stroke="#15161a" stroke-width="2" paint-order="stroke"/><rect x="2988.7" y="588.8" width="18.7" height="3" fill="#8cc662" stroke="#15161a" stroke-width="2" paint-order="stroke"/><rect x="3007.3" y="613.0" width="18.7" height="3" fill="#f7e643" stroke="#15161a" stroke-width="2" paint-order="stroke"/><rect x="3026.0" y="544.0" width="18.7" height="3" fill="#8cc662" stroke="#15161a" stroke-width="2" paint-order="stroke"/><rect x="3044.7" y="600.8" width="18.7" height="3" fill="#8cc662" stroke="#15161a" stroke-width="2" paint-order="stroke"/><rect x="3063.3" y="574.0" width="18.7" height="3" fill="#8cc662" stroke="#15161a" stroke-width="2" paint-order="stroke"/><rect x="3082.0" y="374.0" width="18.7" height="3" fill="#c6d94a" stroke="#15161a" stroke-width="2" paint-order="stroke"/><rect x="3100.7" y="528.8" width="18.7" height="3" fill="#c6d94a" stroke="#15161a" stroke-width="2" paint-order="stroke"/><rect x="3119.3" y="580.1" width="18.7" height="3" fill="#8cc662" stroke="#15161a" stroke-width="2" paint-order="stroke"/><rect x="3138.0" y="600.8" width="18.7" height="3" fill="#5f9a72" stroke="#15161a" stroke-width="2" paint-order="stroke"/><rect x="3156.7" y="613.0" width="18.7" height="3" fill="#8cc662" stroke="#15161a" stroke-width="2" paint-order="stroke"/><rect x="3175.3" y="544.0" width="18.7" height="3" fill="#8cc662" stroke="#15161a" stroke-width="2" paint-order="stroke"/><rect x="3194.0" y="576.9" width="18.7" height="3" fill="#c6d94a" stroke="#15161a" stroke-width="2" paint-order="stroke"/><rect x="3212.7" y="498.8" width="18.7" height="3" fill="#c6d94a" stroke="#15161a" stroke-width="2" paint-order="stroke"/><rect x="3231.3" y="613.0" width="18.7" height="3" fill="#8cc662" stroke="#15161a" stroke-width="2" paint-order="stroke"/><rect x="3250.0" y="574.0" width="18.7" height="3" fill="#8cc662" stroke="#15161a" stroke-width="2" paint-order="stroke"/><rect x="3268.7" y="374.0" width="18.7" height="3" fill="#f7e643" stroke="#15161a" stroke-width="2" paint-order="stroke"/><rect x="3287.3" y="613.0" width="18.7" height="3" fill="#8cc662" stroke="#15161a" stroke-width="2" paint-order="stroke"/><rect x="3306.0" y="592.0" width="18.7" height="3" fill="#5f9a72" stroke="#15161a" stroke-width="2" paint-order="stroke"/><rect x="3324.7" y="583.0" width="18.7" height="3" fill="#c6d94a" stroke="#15161a" stroke-width="2" paint-order="stroke"/><rect x="3343.3" y="613.0" width="18.7" height="3" fill="#5f9a72" stroke="#15161a" stroke-width="2" paint-order="stroke"/><rect x="3362.0" y="510.8" width="18.7" height="3" fill="#8cc662" stroke="#15161a" stroke-width="2" paint-order="stroke"/><rect x="3380.7" y="613.0" width="18.7" height="3" fill="#5f9a72" stroke="#15161a" stroke-width="2" paint-order="stroke"/><rect x="3399.3" y="374.0" width="18.7" height="3" fill="#f7e643" stroke="#15161a" stroke-width="2" paint-order="stroke"/><rect x="3418.0" y="613.0" width="18.7" height="3" fill="#5f9a72" stroke="#15161a" stroke-width="2" paint-order="stroke"/><rect x="3436.7" y="606.9" width="18.7" height="3" fill="#5f9a72" stroke="#15161a" stroke-width="2" paint-order="stroke"/><rect x="3455.3" y="565.0" width="18.7" height="3" fill="#5f9a72" stroke="#15161a" stroke-width="2" paint-order="stroke"/><rect x="3474.0" y="613.0" width="18.7" height="3" fill="#5f9a72" stroke="#15161a" stroke-width="2" paint-order="stroke"/><rect x="3492.7" y="374.0" width="18.7" height="3" fill="#c6d94a" stroke="#15161a" stroke-width="2" paint-order="stroke"/><rect x="3511.3" y="613.0" width="18.7" height="3" fill="#8cc662" stroke="#15161a" stroke-width="2" paint-order="stroke"/><rect x="3530.0" y="574.0" width="18.7" height="3" fill="#c6d94a" stroke="#15161a" stroke-width="2" paint-order="stroke"/><rect x="3548.7" y="576.9" width="18.7" height="3" fill="#c6d94a" stroke="#15161a" stroke-width="2" paint-order="stroke"/><rect x="3567.3" y="571.1" width="18.7" height="3" fill="#8cc662" stroke="#15161a" stroke-width="2" paint-order="stroke"/><rect x="3586.0" y="613.0" width="18.7" height="3" fill="#4a7f7d" stroke="#15161a" stroke-width="2" paint-order="stroke"/><rect x="3604.7" y="549.8" width="18.7" height="3" fill="#4a7f7d" stroke="#15161a" stroke-width="2" paint-order="stroke"/><rect x="3623.3" y="374.0" width="18.7" height="3" fill="#c6d94a" stroke="#15161a" stroke-width="2" paint-order="stroke"/><rect x="3642.0" y="613.0" width="18.7" height="3" fill="#c6d94a" stroke="#15161a" stroke-width="2" paint-order="stroke"/><rect x="3660.7" y="613.0" width="18.7" height="3" fill="#8cc662" stroke="#15161a" stroke-width="2" paint-order="stroke"/><rect x="3679.3" y="595.0" width="18.7" height="3" fill="#8cc662" stroke="#15161a" stroke-width="2" paint-order="stroke"/><rect x="3698.0" y="613.0" width="18.7" height="3" fill="#5f9a72" stroke="#15161a" stroke-width="2" paint-order="stroke"/><rect x="3716.7" y="571.1" width="18.7" height="3" fill="#5f9a72" stroke="#15161a" stroke-width="2" paint-order="stroke"/><rect x="3735.3" y="613.0" width="18.7" height="3" fill="#4a7f7d" stroke="#15161a" stroke-width="2" paint-order="stroke"/><rect x="3754.0" y="574.0" width="18.7" height="3" fill="#4a7f7d" stroke="#15161a" stroke-width="2" paint-order="stroke"/><rect x="3772.7" y="613.0" width="9.3" height="3" fill="#2e2346" stroke="#15161a" stroke-width="2" paint-order="stroke"/><text x="1064" y="386.0" text-anchor="end" font-size="24" fill="#737373">1</text><text x="1064" y="504.9" text-anchor="end" font-size="24" fill="#737373">0.5</text><text x="1064" y="624.3" text-anchor="end" font-size="24" fill="#737373">0</text><text x="1150.1" y="666" text-anchor="middle" font-size="24" fill="#737373">4:30am</text><text x="1262.1" y="666" text-anchor="middle" font-size="24" fill="#737373">5:00am</text><text x="1374.1" y="666" text-anchor="middle" font-size="24" fill="#737373">5:30am</text><text x="1486.1" y="666" text-anchor="middle" font-size="24" fill="#737373">6:00am</text><text x="1598.1" y="666" text-anchor="middle" font-size="24" fill="#737373">6:30am</text><text x="1710.1" y="666" text-anchor="middle" font-size="24" fill="#737373">7:00am</text><text x="1822.1" y="666" text-anchor="middle" font-size="24" fill="#737373">7:30am</text><text x="1934.1" y="666" text-anchor="middle" font-size="24" fill="#737373">8:00am</text><text x="2046.1" y="666" text-anchor="middle" font-size="24" fill="#737373">8:30am</text><text x="2158.1" y="666" text-anchor="middle" font-size="24" fill="#737373">9:00am</text><text x="2270.1" y="666" text-anchor="middle" font-size="24" fill="#737373">9:30am</text><text x="2382.1" y="666" text-anchor="middle" font-size="24" fill="#737373">10:00am</text><text x="2494.1" y="666" text-anchor="middle" font-size="24" fill="#737373">10:30am</text><text x="2606.1" y="666" text-anchor="middle" font-size="24" fill="#737373">11:00am</text><text x="2718.1" y="666" text-anchor="middle" font-size="24" fill="#737373">11:30am</text><text x="2830.1" y="666" text-anchor="middle" font-size="24" fill="#737373">12:00pm</text><text x="2942.1" y="666" text-anchor="middle" font-size="24" fill="#737373">12:30pm</text><text x="3054.1" y="666" text-anchor="middle" font-size="24" fill="#737373">1:00pm</text><text x="3166.1" y="666" text-anchor="middle" font-size="24" fill="#737373">1:30pm</text><text x="3278.1" y="666" text-anchor="middle" font-size="24" fill="#737373">2:00pm</text><text x="3390.1" y="666" text-anchor="middle" font-size="24" fill="#737373">2:30pm</text><text x="3502.1" y="666" text-anchor="middle" font-size="24" fill="#737373">3:00pm</text><text x="3614.1" y="666" text-anchor="middle" font-size="24" fill="#737373">3:30pm</text><text x="3726.1" y="666" text-anchor="middle" font-size="24" fill="#737373">4:00pm</text><text x="1092" y="701.8" font-size="24" fill="#737373">10/10/25</text></svg>
<div style="left:3276px;top:717px;width:44px;height:44px;background:#25262b;border:2px solid #2c2d34;border-radius:4px;box-sizing:border-box"></div>
<svg style="left:3288px;top:727px;" width="20" height="24" viewBox="0 0 20 24" fill="none"><path d="M13 5 L6 12 L13 19" stroke="#55565f" stroke-width="2.2"/></svg>
<div style="left:3336px;top:717px;width:44px;height:44px;background:#79bb93;border-radius:4px"></div>
<div class="t" style="left:3358px;transform:translateX(-50%);top:728.38px;font:400 25px/25px 'Liberation Mono', monospace;color:#ffffff;">1</div>
<div style="left:3396px;top:717px;width:44px;height:44px;background:#25262b;border:2px solid #34353d;border-radius:4px;box-sizing:border-box"></div>
<div class="t" style="left:3418px;transform:translateX(-50%);top:728.38px;font:400 25px/25px 'Liberation Mono', monospace;color:#d4d5dc;">2</div>
<div style="left:3456px;top:717px;width:44px;height:44px;background:#25262b;border:2px solid #34353d;border-radius:4px;box-sizing:border-box"></div>
<div class="t" style="left:3478px;transform:translateX(-50%);top:728.38px;font:400 25px/25px 'Liberation Mono', monospace;color:#d4d5dc;">3</div>
<div style="left:3516px;top:717px;width:44px;height:44px;background:#25262b;border:2px solid #34353d;border-radius:4px;box-sizing:border-box"></div>
<div class="t" style="left:3538px;transform:translateX(-50%);top:728.38px;font:400 25px/25px 'Liberation Mono', monospace;color:#d4d5dc;">4</div>
<div style="left:3576px;top:717px;width:44px;height:44px;background:#25262b;border:2px solid #34353d;border-radius:4px;box-sizing:border-box"></div>
<div class="t" style="left:3598px;transform:translateX(-50%);top:728.38px;font:400 25px/25px 'Liberation Mono', monospace;color:#d4d5dc;">5</div>
<svg style="left:3646px;top:735px;" width="24" height="8" viewBox="0 0 24 8" fill="none"><circle cx="4" cy="4" r="2" fill="#e6e7ec"/><circle cx="12" cy="4" r="2" fill="#e6e7ec"/><circle cx="20" cy="4" r="2" fill="#e6e7ec"/></svg>
<div style="left:3696px;top:717px;width:44px;height:44px;background:#25262b;border:2px solid #34353d;border-radius:4px;box-sizing:border-box"></div>
<div class="t" style="left:3718px;transform:translateX(-50%);top:728.38px;font:400 25px/25px 'Liberation Mono', monospace;color:#d4d5dc;">9</div>
<div style="left:3756px;top:717px;width:44px;height:44px;background:#25262b;border:2px solid #34353d;border-radius:4px;box-sizing:border-box"></div>
<svg style="left:3768px;top:727px;" width="20" height="24" viewBox="0 0 20 24" fill="none"><path d="M7 5 L14 12 L7 19" stroke="#c9cad2" stroke-width="2.2"/></svg>
<svg style="left:0;top:780px" width="3826" height="796" viewBox="0 780 3826 796" font-family="'Liberation Mono', monospace"><text x="1334.3" y="819.0" text-anchor="middle" font-size="24" fill="#b6b7bf">TraceState</text><path d="M1102.3 827.5H1114.3V1006.9M1102.3 1006.9H1674.3M1102.3 917.0H1114.3M1102.3 962.0H1114.3M1394.3 1006.9V1018.9" stroke="#6f6f6f" stroke-width="2" fill="none"/><rect x="1395.8" y="827.0" width="222" height="181" fill="#8bd4a3"/><text x="1098.3" y="850.7" text-anchor="end" font-size="22" fill="#6b6b6b">100</text><text x="1098.3" y="924.7" text-anchor="end" font-size="22" fill="#6b6b6b">50</text><text x="1098.3" y="970.2" text-anchor="end" font-size="22" fill="#6b6b6b">25</text><text x="1098.3" y="1015.1" text-anchor="end" font-size="22" fill="#6b6b6b">0</text><text x="2046.3" y="819.0" text-anchor="middle" font-size="24" fill="#b6b7bf">ResourceAttributes.env</text><path d="M1814.3 827.5H1826.3V1006.9M1814.3 1006.9H2386.3M1814.3 917.0H1826.3M1814.3 962.0H1826.3M2106.3 1006.9V1018.9" stroke="#6f6f6f" stroke-width="2" fill="none"/><rect x="2107.8" y="827.0" width="222" height="181" fill="#8bd4a3"/><text x="1810.3" y="850.7" text-anchor="end" font-size="22" fill="#6b6b6b">100</text><text x="1810.3" y="924.7" text-anchor="end" font-size="22" fill="#6b6b6b">50</text><text x="1810.3" y="970.2" text-anchor="end" font-size="22" fill="#6b6b6b">25</text><text x="1810.3" y="1015.1" text-anchor="end" font-size="22" fill="#6b6b6b">0</text><text x="2106.3" y="1036.5" text-anchor="middle" font-size="20" fill="#6a6a6a">production</text><text x="2758.3" y="819.0" text-anchor="middle" font-size="24" fill="#b6b7bf">ResourceAttributes.node.env</text><path d="M2526.3 827.5H2538.3V1006.9M2526.3 1006.9H3098.3M2526.3 917.0H2538.3M2526.3 962.0H2538.3M2818.3 1006.9V1018.9" stroke="#6f6f6f" stroke-width="2" fill="none"/><rect x="2819.8" y="827.0" width="222" height="181" fill="#8bd4a3"/><text x="2522.3" y="850.7" text-anchor="end" font-size="22" fill="#6b6b6b">100</text><text x="2522.3" y="924.7" text-anchor="end" font-size="22" fill="#6b6b6b">50</text><text x="2522.3" y="970.2" text-anchor="end" font-size="22" fill="#6b6b6b">25</text><text x="2522.3" y="1015.1" text-anchor="end" font-size="22" fill="#6b6b6b">0</text><text x="2818.3" y="1036.5" text-anchor="middle" font-size="20" fill="#6a6a6a">production</text><text x="3470.3" y="819.0" text-anchor="middle" font-size="24" fill="#b6b7bf">ResourceAttribu..cel.branch_host</text><path d="M3238.3 827.5H3250.3V1006.9M3238.3 1006.9H3810.3M3238.3 917.0H3250.3M3238.3 962.0H3250.3M3530.3 1006.9V1018.9" stroke="#6f6f6f" stroke-width="2" fill="none"/><rect x="3531.8" y="827.0" width="222" height="181" fill="#8bd4a3"/><text x="3234.3" y="850.7" text-anchor="end" font-size="22" fill="#6b6b6b">100</text><text x="3234.3" y="924.7" text-anchor="end" font-size="22" fill="#6b6b6b">50</text><text x="3234.3" y="970.2" text-anchor="end" font-size="22" fill="#6b6b6b">25</text><text x="3234.3" y="1015.1" text-anchor="end" font-size="22" fill="#6b6b6b">0</text><text x="3530.3" y="1036.5" text-anchor="middle" font-size="20" fill="#6a6a6a">clickpy-git-main-clickhouse.vercel.app</text><text x="1334.3" y="1091.0" text-anchor="middle" font-size="24" fill="#b6b7bf">ResourceAttributes.vercel.region</text><path d="M1102.3 1099.5H1114.3V1278.9M1102.3 1278.9H1674.3M1102.3 1189.0H1114.3M1102.3 1234.0H1114.3M1394.3 1278.9V1290.9" stroke="#6f6f6f" stroke-width="2" fill="none"/><rect x="1395.8" y="1099.0" width="222" height="181" fill="#8bd4a3"/><text x="1098.3" y="1122.7" text-anchor="end" font-size="22" fill="#6b6b6b">100</text><text x="1098.3" y="1196.7" text-anchor="end" font-size="22" fill="#6b6b6b">50</text><text x="1098.3" y="1242.2" text-anchor="end" font-size="22" fill="#6b6b6b">25</text><text x="1098.3" y="1287.1" text-anchor="end" font-size="22" fill="#6b6b6b">0</text><text x="1394.3" y="1308.5" text-anchor="middle" font-size="20" fill="#6a6a6a">iad1</text><text x="2046.3" y="1091.0" text-anchor="middle" font-size="24" fill="#b6b7bf">ResourceAttribu...vercel.runtime</text><path d="M1814.3 1099.5H1826.3V1278.9M1814.3 1278.9H2386.3M1814.3 1189.0H1826.3M1814.3 1234.0H1826.3M2106.3 1278.9V1290.9" stroke="#6f6f6f" stroke-width="2" fill="none"/><rect x="2107.8" y="1099.0" width="222" height="181" fill="#8bd4a3"/><text x="1810.3" y="1122.7" text-anchor="end" font-size="22" fill="#6b6b6b">100</text><text x="1810.3" y="1196.7" text-anchor="end" font-size="22" fill="#6b6b6b">50</text><text x="1810.3" y="1242.2" text-anchor="end" font-size="22" fill="#6b6b6b">25</text><text x="1810.3" y="1287.1" text-anchor="end" font-size="22" fill="#6b6b6b">0</text><text x="2106.3" y="1308.5" text-anchor="middle" font-size="20" fill="#6a6a6a">nodejs</text><text x="2758.3" y="1091.0" text-anchor="middle" font-size="24" fill="#b6b7bf">SpanAttributes.next.page</text><path d="M2526.3 1099.5H2538.3V1278.9M2526.3 1278.9H3098.3M2526.3 1189.0H2538.3M2526.3 1234.0H2538.3M2818.3 1278.9V1290.9" stroke="#6f6f6f" stroke-width="2" fill="none"/><rect x="2819.8" y="1099.0" width="222" height="181" fill="#8bd4a3"/><text x="2522.3" y="1122.7" text-anchor="end" font-size="22" fill="#6b6b6b">100</text><text x="2522.3" y="1196.7" text-anchor="end" font-size="22" fill="#6b6b6b">50</text><text x="2522.3" y="1242.2" text-anchor="end" font-size="22" fill="#6b6b6b">25</text><text x="2522.3" y="1287.1" text-anchor="end" font-size="22" fill="#6b6b6b">0</text><text x="2818.3" y="1308.5" text-anchor="middle" font-size="20" fill="#6a6a6a">/dashboard/[package_name]/page</text><text x="3470.3" y="1091.0" text-anchor="middle" font-size="24" fill="#b6b7bf">SpanAttributes.http.client.name</text><path d="M3238.3 1099.5H3250.3V1278.9M3238.3 1278.9H3810.3M3238.3 1189.0H3250.3M3238.3 1234.0H3250.3M3530.3 1278.9V1290.9" stroke="#6f6f6f" stroke-width="2" fill="none"/><rect x="3531.8" y="1099.0" width="222" height="181" fill="#8bd4a3"/><text x="3234.3" y="1122.7" text-anchor="end" font-size="22" fill="#6b6b6b">100</text><text x="3234.3" y="1196.7" text-anchor="end" font-size="22" fill="#6b6b6b">50</text><text x="3234.3" y="1242.2" text-anchor="end" font-size="22" fill="#6b6b6b">25</text><text x="3234.3" y="1287.1" text-anchor="end" font-size="22" fill="#6b6b6b">0</text><text x="3530.3" y="1308.5" text-anchor="middle" font-size="20" fill="#6a6a6a">http</text><text x="1334.3" y="1363.0" text-anchor="middle" font-size="24" fill="#b6b7bf">SpanAttributes.http.scheme</text><path d="M1102.3 1371.5H1114.3V1550.9M1102.3 1550.9H1674.3M1102.3 1461.0H1114.3M1102.3 1506.0H1114.3M1394.3 1550.9V1562.9" stroke="#6f6f6f" stroke-width="2" fill="none"/><rect x="1395.8" y="1371.0" width="222" height="181" fill="#8bd4a3"/><text x="1098.3" y="1394.7" text-anchor="end" font-size="22" fill="#6b6b6b">100</text><text x="1098.3" y="1468.7" text-anchor="end" font-size="22" fill="#6b6b6b">50</text><text x="1098.3" y="1514.2" text-anchor="end" font-size="22" fill="#6b6b6b">25</text><text x="1098.3" y="1559.1" text-anchor="end" font-size="22" fill="#6b6b6b">0</text><text x="1394.3" y="1580.5" text-anchor="middle" font-size="20" fill="#6a6a6a">https</text><text x="2046.3" y="1363.0" text-anchor="middle" font-size="24" fill="#b6b7bf">SpanAttributes.net.peer.name</text><path d="M1814.3 1371.5H1826.3V1550.9M1814.3 1550.9H2386.3M1814.3 1461.0H1826.3M1814.3 1506.0H1826.3M2106.3 1550.9V1562.9" stroke="#6f6f6f" stroke-width="2" fill="none"/><rect x="2107.8" y="1371.0" width="222" height="181" fill="#8bd4a3"/><text x="1810.3" y="1394.7" text-anchor="end" font-size="22" fill="#6b6b6b">100</text><text x="1810.3" y="1468.7" text-anchor="end" font-size="22" fill="#6b6b6b">50</text><text x="1810.3" y="1514.2" text-anchor="end" font-size="22" fill="#6b6b6b">25</text><text x="1810.3" y="1559.1" text-anchor="end" font-size="22" fill="#6b6b6b">0</text><text x="2386.3" y="1580.5" text-anchor="end" font-size="20" fill="#6a6a6a">z5nrz9qgc4.us-central1.gcp.clickhouse-staging.com</text><text x="2758.3" y="1363.0" text-anchor="middle" font-size="24" fill="#b6b7bf">SpanAttributes.net.peer.port</text><path d="M2526.3 1371.5H2538.3V1550.9M2526.3 1550.9H3098.3M2526.3 1461.0H2538.3M2526.3 1506.0H2538.3M2818.3 1550.9V1562.9" stroke="#6f6f6f" stroke-width="2" fill="none"/><rect x="2819.8" y="1371.0" width="222" height="181" fill="#8bd4a3"/><text x="2522.3" y="1394.7" text-anchor="end" font-size="22" fill="#6b6b6b">100</text><text x="2522.3" y="1468.7" text-anchor="end" font-size="22" fill="#6b6b6b">50</text><text x="2522.3" y="1514.2" text-anchor="end" font-size="22" fill="#6b6b6b">25</text><text x="2522.3" y="1559.1" text-anchor="end" font-size="22" fill="#6b6b6b">0</text><text x="2818.3" y="1580.5" text-anchor="middle" font-size="20" fill="#6a6a6a">8443</text><text x="3470.3" y="1363.0" text-anchor="middle" font-size="24" fill="#b6b7bf">SpanAttributes.db.system</text><path d="M3238.3 1371.5H3250.3V1550.9M3238.3 1550.9H3810.3M3238.3 1461.0H3250.3M3238.3 1506.0H3250.3M3530.3 1550.9V1562.9" stroke="#6f6f6f" stroke-width="2" fill="none"/><rect x="3531.8" y="1371.0" width="222" height="181" fill="#8bd4a3"/><text x="3234.3" y="1394.7" text-anchor="end" font-size="22" fill="#6b6b6b">100</text><text x="3234.3" y="1468.7" text-anchor="end" font-size="22" fill="#6b6b6b">50</text><text x="3234.3" y="1514.2" text-anchor="end" font-size="22" fill="#6b6b6b">25</text><text x="3234.3" y="1559.1" text-anchor="end" font-size="22" fill="#6b6b6b">0</text><text x="3530.3" y="1580.5" text-anchor="middle" font-size="20" fill="#6a6a6a">clickhouse</text></svg>
<div style="left:3744px;top:968px;width:71px;height:71px;background:#060708;border-radius:50%;border:2px solid #26272d;box-sizing:border-box;box-shadow:0 0 14px rgba(0,0,0,.55)"></div>
<svg style="left:3759px;top:987.5px;" width="40" height="36" viewBox="0 0 40 36" fill="none"><path d="M11 6.500H34M17 16H34M22 25.500H34" stroke="#f2f2f5" stroke-width="2.6"/><circle cx="10" cy="23.500" r="7.2" fill="#f2f2f5"/><path d="M10 19.500 L14 26.500 H6 Z" fill="#060708"/></svg>
</body></html>
